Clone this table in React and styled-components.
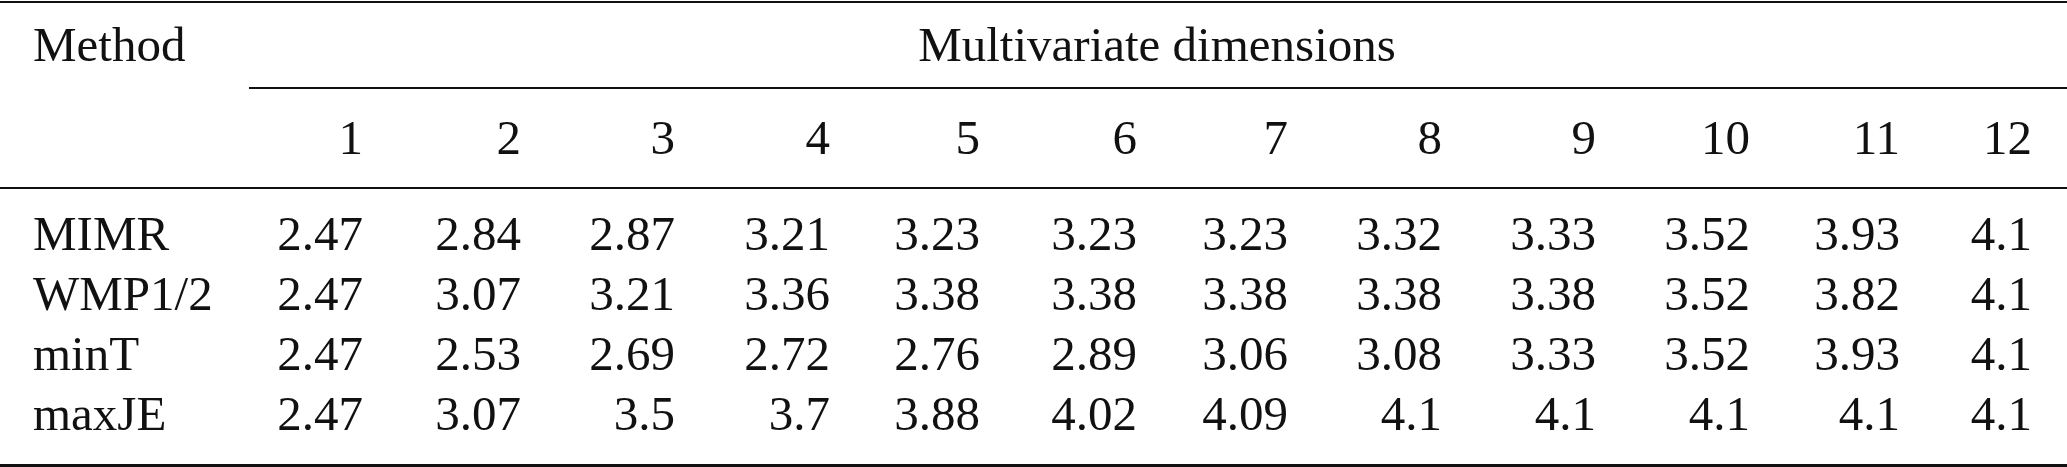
import React from "react";
import styled, { createGlobalStyle } from "styled-components";

const Global = createGlobalStyle`
  html, body { margin: 0; padding: 0; background: #ffffff; }
  body { font-family: "Liberation Serif", "Times New Roman", serif; color: #111; }
`;

const COLS = "209px 154px 158px 154px 155px 150px 157px 151px 154px 154px 154px 150px 132px 35px";

const Table = styled.div`
  width: 2067px;
  height: 467px;
  display: flex;
  flex-direction: column;
  font-family: "Liberation Serif", "Times New Roman", serif;
  font-size: 49px;
  color: #111;
`;

const Rule = styled.div`
  height: ${(p) => p.$h}px;
  margin-top: ${(p) => p.$mt || 0}px;
  margin-left: ${(p) => p.$ml || 0}px;
  background: #111;
  flex: none;
`;

const Row = styled.div`
  display: grid;
  grid-template-columns: ${COLS};
  height: ${(p) => p.$h}px;
  line-height: ${(p) => p.$h}px;
  flex: none;
`;

const Label = styled.div`
  padding-left: 33px;
  white-space: nowrap;
`;

const Span = styled.div`
  grid-column: 2 / -1;
  text-align: center;
  padding-left: 38px;
  white-space: nowrap;
`;

const Num = styled.div`
  text-align: right;
  white-space: nowrap;
`;

const Body = styled.div`
  display: flex;
  flex-direction: column;
  padding-top: 14.5px;
  padding-bottom: 20.5px;
`;

const dims = [1, 2, 3, 4, 5, 6, 7, 8, 9, 10, 11, 12];

const data = [
  ["MIMR", ["2.47", "2.84", "2.87", "3.21", "3.23", "3.23", "3.23", "3.32", "3.33", "3.52", "3.93", "4.1"]],
  ["WMP1/2", ["2.47", "3.07", "3.21", "3.36", "3.38", "3.38", "3.38", "3.38", "3.38", "3.52", "3.82", "4.1"]],
  ["minT", ["2.47", "2.53", "2.69", "2.72", "2.76", "2.89", "3.06", "3.08", "3.33", "3.52", "3.93", "4.1"]],
  ["maxJE", ["2.47", "3.07", "3.5", "3.7", "3.88", "4.02", "4.09", "4.1", "4.1", "4.1", "4.1", "4.1"]],
];

export default function App() {
  return (
    <>
      <Global />
      <Table>
        <Rule $h={2} $mt={1} />
        <Row $h={84}>
          <Label>Method</Label>
          <Span>Multivariate dimensions</Span>
        </Row>
        <Rule $h={2} $ml={249} />
        <Row $h={98}>
          <Label />
          {dims.map((d) => (
            <Num key={d}>{d}</Num>
          ))}
        </Row>
        <Rule $h={2} />
        <Body>
          {data.map(([name, vals]) => (
            <Row $h={60} key={name}>
              <Label>{name}</Label>
              {vals.map((v, i) => (
                <Num key={i}>{v}</Num>
              ))}
            </Row>
          ))}
        </Body>
        <Rule $h={3} />
      </Table>
    </>
  );
}
